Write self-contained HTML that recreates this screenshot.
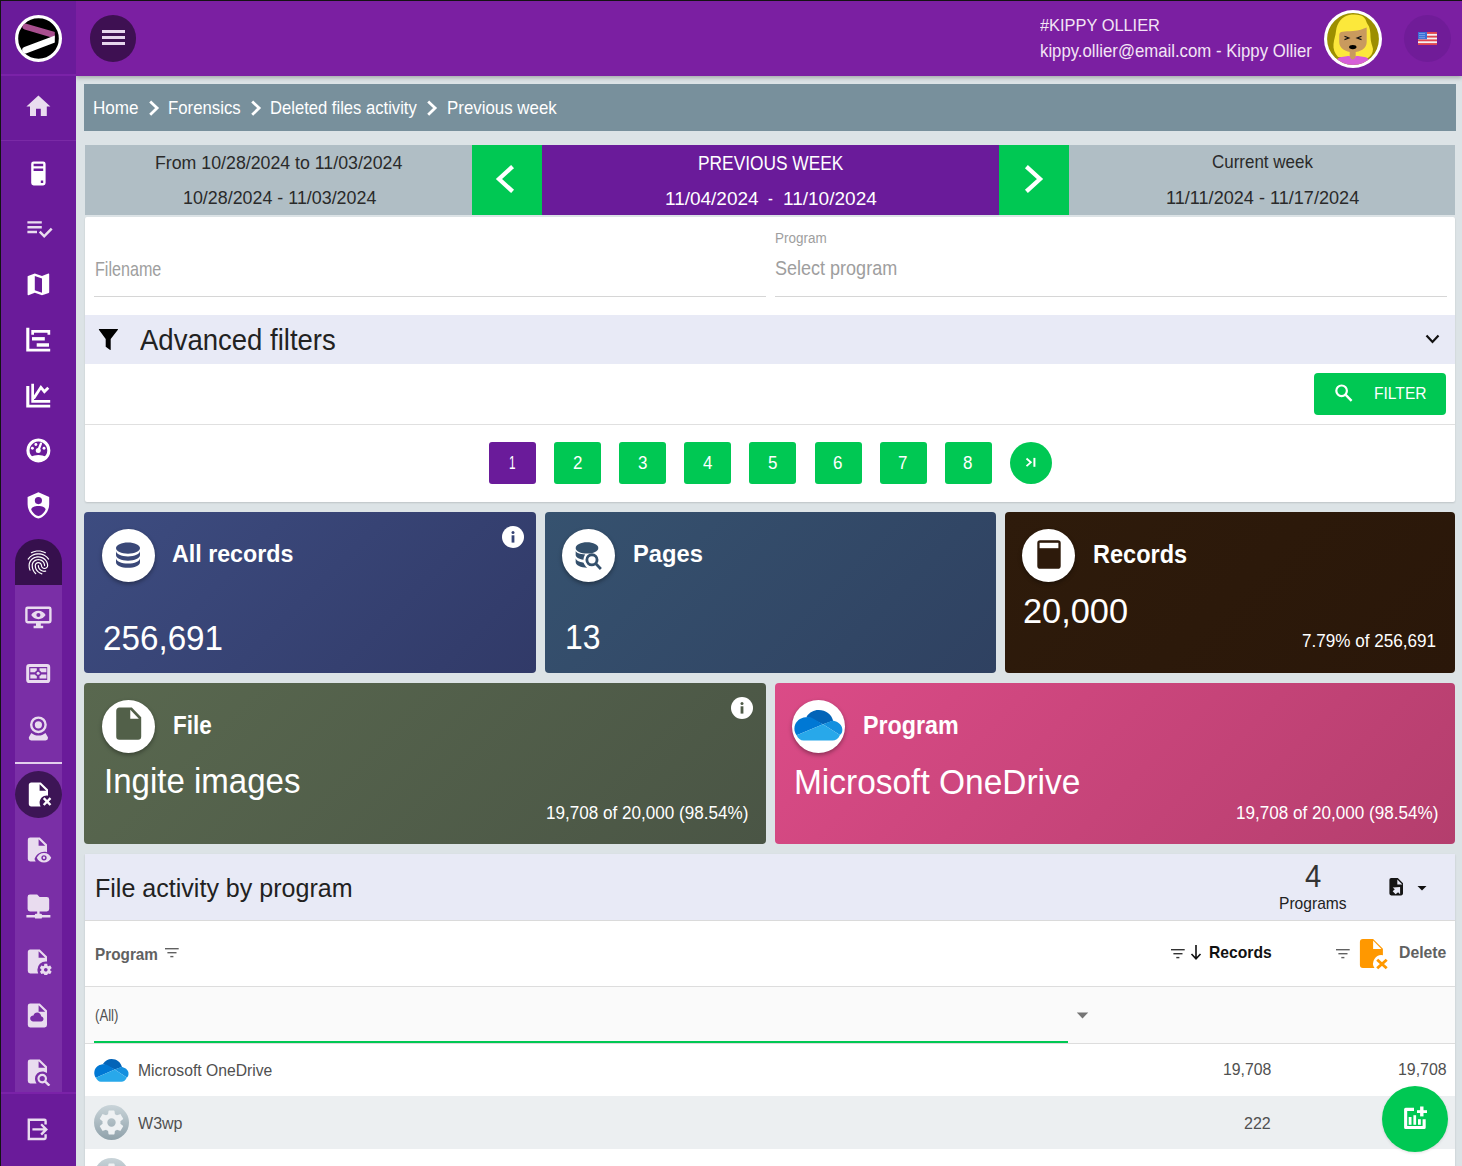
<!DOCTYPE html>
<html><head><meta charset="utf-8"><style>
html,body{margin:0;padding:0;}
body{width:1462px;height:1166px;overflow:hidden;position:relative;background:#dce3e6;font-family:"Liberation Sans",sans-serif;}
.b{position:absolute;}
.t{position:absolute;white-space:nowrap;}
</style></head><body>
<div class="b" style="left:0px;top:0px;width:1462px;height:1px;background:#141414;"></div>
<div class="b" style="left:0px;top:0px;width:1px;height:1166px;background:#141414;"></div>
<div class="b" style="left:76px;top:1px;width:1386px;height:75px;background:#7b1fa2;box-shadow:0 2px 4px rgba(0,0,0,0.25);z-index:2;"></div>
<div class="b" style="left:1px;top:1px;width:75px;height:1165px;background:#6a1b9a;z-index:3;"></div>
<div class="b" style="left:1px;top:74px;width:75px;height:2px;background:#7a22a8;z-index:3;"></div>
<div class="b" style="left:1px;top:140px;width:75px;height:1px;background:#7a2aa6;z-index:3;"></div>
<div class="t" style="left:1040.00px;top:17.02px;font-size:17.10px;line-height:17.10px;color:#f3e5f5;transform-origin:0 0;transform:scaleX(0.9586);z-index:4;">#KIPPY OLLIER</div>
<div class="t" style="left:1040.00px;top:42.61px;font-size:17.83px;line-height:17.83px;color:#f3e5f5;transform-origin:0 0;transform:scaleX(0.9397);z-index:4;">kippy.ollier@email.com - Kippy Ollier</div>
<div class="b" style="left:84px;top:84px;width:1372px;height:47px;background:#78909c;"></div>
<div class="t" style="left:93.30px;top:97.71px;font-size:19.13px;line-height:19.13px;color:#ffffff;transform-origin:0 0;transform:scaleX(0.8947);">Home</div>
<div class="t" style="left:168.00px;top:97.71px;font-size:19.13px;line-height:19.13px;color:#ffffff;transform-origin:0 0;transform:scaleX(0.8777);">Forensics</div>
<div class="t" style="left:270.00px;top:97.71px;font-size:19.13px;line-height:19.13px;color:#ffffff;transform-origin:0 0;transform:scaleX(0.8692);">Deleted files activity</div>
<div class="t" style="left:446.70px;top:97.71px;font-size:19.13px;line-height:19.13px;color:#ffffff;transform-origin:0 0;transform:scaleX(0.8833);">Previous week</div>
<div class="b" style="left:85px;top:145px;width:387px;height:70px;background:#b0bec5;"></div>
<div class="b" style="left:472px;top:145px;width:70px;height:70px;background:#00c853;"></div>
<div class="b" style="left:542px;top:145px;width:457px;height:70px;background:#6a1b9a;"></div>
<div class="b" style="left:999px;top:145px;width:70px;height:70px;background:#00c853;"></div>
<div class="b" style="left:1069px;top:145px;width:386px;height:70px;background:#b0bec5;"></div>
<div class="t" style="left:155.00px;top:154.06px;font-size:18.12px;line-height:18.12px;color:#2a2a2a;transform-origin:0 0;transform:scaleX(0.9800);">From 10/28/2024 to 11/03/2024</div>
<div class="t" style="left:182.60px;top:188.84px;font-size:18.26px;line-height:18.26px;color:#2a2a2a;transform-origin:0 0;transform:scaleX(0.9788);">10/28/2024 - 11/03/2024</div>
<div class="t" style="left:698.00px;top:154.14px;font-size:19.57px;line-height:19.57px;color:#ffffff;transform-origin:0 0;transform:scaleX(0.8858);">PREVIOUS WEEK</div>
<div class="t" style="left:664.80px;top:191.29px;font-size:17.97px;line-height:17.97px;color:#ffffff;transform-origin:0 0;transform:scaleX(1.0565);">11/04/2024</div>
<div class="t" style="left:768.00px;top:191.29px;font-size:17.97px;line-height:17.97px;color:#ffffff;transform-origin:0 0;transform:scaleX(0.8094);">-</div>
<div class="t" style="left:782.70px;top:191.29px;font-size:17.97px;line-height:17.97px;color:#ffffff;transform-origin:0 0;transform:scaleX(1.0599);">11/10/2024</div>
<div class="t" style="left:1211.70px;top:154.21px;font-size:17.83px;line-height:17.83px;color:#2a2a2a;transform-origin:0 0;transform:scaleX(0.9516);">Current week</div>
<div class="t" style="left:1165.70px;top:188.86px;font-size:18.12px;line-height:18.12px;color:#2a2a2a;transform-origin:0 0;transform:scaleX(0.9995);">11/11/2024 - 11/17/2024</div>
<div class="b" style="left:85px;top:217px;width:1370px;height:285px;background:#ffffff;box-shadow:0 1px 2px rgba(0,0,0,0.14);border-radius:2px;"></div>
<div class="t" style="left:94.50px;top:260.46px;font-size:19.42px;line-height:19.42px;color:#9e9e9e;transform-origin:0 0;transform:scaleX(0.8306);">Filename</div>
<div class="b" style="left:94px;top:296px;width:672px;height:1px;background:#d6d6d6;"></div>
<div class="t" style="left:775.40px;top:230.73px;font-size:14.49px;line-height:14.49px;color:#9e9e9e;transform-origin:0 0;transform:scaleX(0.9296);">Program</div>
<div class="t" style="left:775.40px;top:259.02px;font-size:19.71px;line-height:19.71px;color:#9e9e9e;transform-origin:0 0;transform:scaleX(0.9152);">Select program</div>
<div class="b" style="left:775px;top:296px;width:672px;height:1px;background:#d6d6d6;"></div>
<div class="b" style="left:85px;top:315px;width:1370px;height:49px;background:#e8eaf6;"></div>
<div class="t" style="left:140.30px;top:325.25px;font-size:29.71px;line-height:29.71px;color:#222222;transform-origin:0 0;transform:scaleX(0.9264);">Advanced filters</div>
<div class="b" style="left:1314px;top:373px;width:132px;height:42px;background:#00c853;border-radius:4px;"></div>
<div class="t" style="left:1374.40px;top:386.25px;font-size:16.96px;line-height:16.96px;color:#ffffff;transform-origin:0 0;transform:scaleX(0.9205);">FILTER</div>
<div class="b" style="left:85px;top:424px;width:1370px;height:1px;background:#e0e0e0;"></div>
<div class="b" style="left:489.0px;top:442px;width:47px;height:42px;background:#6a1b9a;border-radius:3px;"></div>
<div class="t" style="left:508.70px;top:454.76px;font-size:17.54px;line-height:17.54px;color:#ffffff;transform-origin:0 0;transform:scaleX(0.6721);">1</div>
<div class="b" style="left:554.1px;top:442px;width:47px;height:42px;background:#00c853;border-radius:3px;"></div>
<div class="t" style="left:572.85px;top:454.76px;font-size:17.54px;line-height:17.54px;color:#ffffff;transform-origin:0 0;transform:scaleX(0.9674);">2</div>
<div class="b" style="left:619.2px;top:442px;width:47px;height:42px;background:#00c853;border-radius:3px;"></div>
<div class="t" style="left:637.95px;top:454.76px;font-size:17.54px;line-height:17.54px;color:#ffffff;transform-origin:0 0;transform:scaleX(0.9674);">3</div>
<div class="b" style="left:684.3px;top:442px;width:47px;height:42px;background:#00c853;border-radius:3px;"></div>
<div class="t" style="left:703.05px;top:454.76px;font-size:17.54px;line-height:17.54px;color:#ffffff;transform-origin:0 0;transform:scaleX(0.9674);">4</div>
<div class="b" style="left:749.4px;top:442px;width:47px;height:42px;background:#00c853;border-radius:3px;"></div>
<div class="t" style="left:768.15px;top:454.76px;font-size:17.54px;line-height:17.54px;color:#ffffff;transform-origin:0 0;transform:scaleX(0.9674);">5</div>
<div class="b" style="left:814.5px;top:442px;width:47px;height:42px;background:#00c853;border-radius:3px;"></div>
<div class="t" style="left:833.25px;top:454.76px;font-size:17.54px;line-height:17.54px;color:#ffffff;transform-origin:0 0;transform:scaleX(0.9674);">6</div>
<div class="b" style="left:879.5999999999999px;top:442px;width:47px;height:42px;background:#00c853;border-radius:3px;"></div>
<div class="t" style="left:898.35px;top:454.76px;font-size:17.54px;line-height:17.54px;color:#ffffff;transform-origin:0 0;transform:scaleX(0.9674);">7</div>
<div class="b" style="left:944.6999999999999px;top:442px;width:47px;height:42px;background:#00c853;border-radius:3px;"></div>
<div class="t" style="left:963.45px;top:454.76px;font-size:17.54px;line-height:17.54px;color:#ffffff;transform-origin:0 0;transform:scaleX(0.9674);">8</div>
<div class="b" style="left:1010px;top:442px;width:42px;height:42px;background:#00c853;border-radius:50%;"></div>
<div class="b" style="left:84px;top:512px;width:452px;height:161px;background:linear-gradient(135deg,#3d4c80,#313a68);border-radius:4px;"></div>
<div class="b" style="left:545px;top:512px;width:451px;height:161px;background:linear-gradient(135deg,#36526f,#2f4161);border-radius:4px;"></div>
<div class="b" style="left:1005px;top:512px;width:450px;height:161px;background:linear-gradient(135deg,#2e1b0b,#2a1709);border-radius:4px;"></div>
<div class="b" style="left:84px;top:683px;width:682px;height:161px;background:linear-gradient(135deg,#59684f,#4a5545);border-radius:4px;"></div>
<div class="b" style="left:775px;top:683px;width:680px;height:161px;background:linear-gradient(135deg,#db4b87,#b43e6d);border-radius:4px;"></div>
<div class="b" style="left:101.5px;top:528.9px;width:53px;height:53px;background:#ffffff;border-radius:50%;box-shadow:0 2px 4px rgba(0,0,0,0.35);"></div>
<div class="b" style="left:561.9px;top:528.9px;width:53px;height:53px;background:#ffffff;border-radius:50%;box-shadow:0 2px 4px rgba(0,0,0,0.35);"></div>
<div class="b" style="left:1022.0px;top:528.9px;width:53px;height:53px;background:#ffffff;border-radius:50%;box-shadow:0 2px 4px rgba(0,0,0,0.35);"></div>
<div class="b" style="left:101.5px;top:700.0px;width:53px;height:53px;background:#ffffff;border-radius:50%;box-shadow:0 2px 4px rgba(0,0,0,0.35);"></div>
<div class="b" style="left:792.0px;top:700.0px;width:53px;height:53px;background:#ffffff;border-radius:50%;box-shadow:0 2px 4px rgba(0,0,0,0.35);"></div>
<div class="t" style="left:172.00px;top:542.42px;font-size:24.78px;line-height:24.78px;color:#ffffff;transform-origin:0 0;transform:scaleX(0.9384);font-weight:bold;">All records</div>
<div class="t" style="left:633.00px;top:542.42px;font-size:24.78px;line-height:24.78px;color:#ffffff;transform-origin:0 0;transform:scaleX(0.9575);font-weight:bold;">Pages</div>
<div class="t" style="left:1093.40px;top:542.15px;font-size:25.22px;line-height:25.22px;color:#ffffff;transform-origin:0 0;transform:scaleX(0.9329);font-weight:bold;">Records</div>
<div class="t" style="left:102.60px;top:620.27px;font-size:35.24px;line-height:35.24px;color:#ffffff;transform-origin:0 0;transform:scaleX(0.9424);">256,691</div>
<div class="t" style="left:564.60px;top:620.43px;font-size:34.81px;line-height:34.81px;color:#ffffff;transform-origin:0 0;transform:scaleX(0.9161);">13</div>
<div class="t" style="left:1023.30px;top:592.77px;font-size:35.24px;line-height:35.24px;color:#ffffff;transform-origin:0 0;transform:scaleX(0.9745);">20,000</div>
<div class="t" style="left:1302.20px;top:633.34px;font-size:17.91px;line-height:17.91px;color:#ffffff;transform-origin:0 0;transform:scaleX(0.9551);">7.79% of 256,691</div>
<div class="t" style="left:173.20px;top:713.05px;font-size:25.22px;line-height:25.22px;color:#ffffff;transform-origin:0 0;transform:scaleX(0.8899);font-weight:bold;">File</div>
<div class="t" style="left:863.40px;top:713.05px;font-size:25.22px;line-height:25.22px;color:#ffffff;transform-origin:0 0;transform:scaleX(0.9224);font-weight:bold;">Program</div>
<div class="t" style="left:104.00px;top:763.80px;font-size:34.49px;line-height:34.49px;color:#ffffff;transform-origin:0 0;transform:scaleX(0.9575);">Ingite images</div>
<div class="t" style="left:793.60px;top:763.89px;font-size:35.22px;line-height:35.22px;color:#ffffff;transform-origin:0 0;transform:scaleX(0.9500);">Microsoft OneDrive</div>
<div class="t" style="left:546.00px;top:804.70px;font-size:17.48px;line-height:17.48px;color:#ffffff;transform-origin:0 0;transform:scaleX(0.9780);">19,708 of 20,000 (98.54%)</div>
<div class="t" style="left:1236.00px;top:804.70px;font-size:17.48px;line-height:17.48px;color:#ffffff;transform-origin:0 0;transform:scaleX(0.9780);">19,708 of 20,000 (98.54%)</div>
<div class="b" style="left:85px;top:854px;width:1370px;height:320px;background:#ffffff;box-shadow:0 1px 2px rgba(0,0,0,0.14);"></div>
<div class="b" style="left:85px;top:854px;width:1370px;height:66px;background:#e8eaf6;"></div>
<div class="b" style="left:85px;top:920px;width:1370px;height:1px;background:#dadada;"></div>
<div class="t" style="left:95.00px;top:874.57px;font-size:26.38px;line-height:26.38px;color:#222222;transform-origin:0 0;transform:scaleX(0.9500);">File activity by program</div>
<div class="t" style="left:1304.60px;top:861.46px;font-size:31.95px;line-height:31.95px;color:#333333;transform-origin:0 0;transform:scaleX(0.9167);">4</div>
<div class="t" style="left:1279.40px;top:894.64px;font-size:16.38px;line-height:16.38px;color:#222222;transform-origin:0 0;transform:scaleX(0.9533);">Programs</div>
<div class="t" style="left:95.00px;top:945.84px;font-size:16.38px;line-height:16.38px;color:#616161;transform-origin:0 0;transform:scaleX(0.9360);font-weight:bold;">Program</div>
<div class="t" style="left:1208.50px;top:945.09px;font-size:16.67px;line-height:16.67px;color:#111111;transform-origin:0 0;transform:scaleX(0.9405);font-weight:bold;">Records</div>
<div class="t" style="left:1398.60px;top:945.09px;font-size:16.67px;line-height:16.67px;color:#616161;transform-origin:0 0;transform:scaleX(0.9480);font-weight:bold;">Delete</div>
<div class="b" style="left:85px;top:986px;width:1370px;height:1px;background:#dddddd;"></div>
<div class="b" style="left:85px;top:987px;width:1370px;height:56px;background:#fafafa;"></div>
<div class="t" style="left:94.50px;top:1007.16px;font-size:16.23px;line-height:16.23px;color:#505050;transform-origin:0 0;transform:scaleX(0.8134);">(All)</div>
<div class="b" style="left:94px;top:1041px;width:974px;height:2px;background:#00c853;"></div>
<div class="b" style="left:85px;top:1043px;width:1370px;height:1px;background:#dddddd;"></div>
<div class="t" style="left:138.00px;top:1061.56px;font-size:16.23px;line-height:16.23px;color:#505050;transform-origin:0 0;transform:scaleX(0.9673);">Microsoft OneDrive</div>
<div class="t" style="left:1222.80px;top:1062.06px;font-size:15.76px;line-height:15.76px;color:#505050;transform-origin:0 0;transform:scaleX(1.0037);">19,708</div>
<div class="t" style="left:1397.60px;top:1062.06px;font-size:15.76px;line-height:15.76px;color:#505050;transform-origin:0 0;transform:scaleX(1.0099);">19,708</div>
<div class="b" style="left:85px;top:1096px;width:1370px;height:53px;background:#eceff1;"></div>
<div class="t" style="left:138.00px;top:1114.96px;font-size:16.23px;line-height:16.23px;color:#505050;transform-origin:0 0;transform:scaleX(0.9884);">W3wp</div>
<div class="t" style="left:1244.20px;top:1115.56px;font-size:15.76px;line-height:15.76px;color:#505050;transform-origin:0 0;transform:scaleX(1.0183);">222</div>
<div class="b" style="left:1382px;top:1086px;width:66px;height:66px;background:#00c853;border-radius:50%;box-shadow:0 1px 3px rgba(0,0,0,0.12);"></div>
<div class="b" style="left:15px;top:539px;width:47px;height:46px;background:#36104d;border-radius:23.5px 23.5px 0 0;z-index:4;"></div>
<div class="b" style="left:15px;top:585px;width:47px;height:507px;background:#7a2fa6;z-index:4;"></div>
<div class="b" style="left:15px;top:762px;width:47px;height:1.5px;background:#e3cfee;z-index:5;"></div>
<div class="b" style="left:15px;top:771px;width:47px;height:47px;background:#3d1556;border-radius:50%;z-index:5;"></div>
<div class="b" style="left:1px;top:1092px;width:75px;height:2px;background:#7a22a8;z-index:4;"></div>
<svg class="b" style="left:23.6px;top:92.4px;z-index:5;" width="28.8" height="28.8" viewBox="0 0 24 24" preserveAspectRatio="none"><path fill="#e9dcef" d="M10,20V14H14V20H19V12H22L12,3L2,12H5V20H10Z"/></svg>
<svg class="b" style="left:24.1px;top:159.3px;z-index:5;" width="28.8" height="28.8" viewBox="0 0 24 24" preserveAspectRatio="none"><path fill="#ffffff" d="M8,2H16A2,2 0 0,1 18,4V20A2,2 0 0,1 16,22H8A2,2 0 0,1 6,20V4A2,2 0 0,1 8,2M8,4V6H16V4H8M16,8H8V10H16V8M16,18H14V20H16V18Z"/></svg>
<svg class="b" style="left:25.2px;top:214.0px;z-index:5;" width="28.8" height="28.8" viewBox="0 0 24 24" preserveAspectRatio="none"><path fill="#e9dcef" d="M14,10H2V12H14V10M14,6H2V8H14V6M2,16H10V14H2V16M21.5,11.5L23,13L16,20L11.5,15.5L13,14L16,17L21.5,11.5Z"/></svg>
<svg class="b" style="left:24.1px;top:270.3px;z-index:5;" width="28.8" height="28.8" viewBox="0 0 24 24" preserveAspectRatio="none"><path fill="#ffffff" d="M15,19L9,16.89V5L15,7.11M20.5,3C20.44,3 20.39,3 20.34,3L15,5.1L9,3L3.36,4.9C3.15,4.97 3,5.15 3,5.38V20.5A0.5,0.5 0 0,0 3.5,21C3.55,21 3.61,21 3.66,20.97L9,18.9L15,21L20.64,19.1C20.85,19 21,18.85 21,18.62V3.5A0.5,0.5 0 0,0 20.5,3Z"/></svg>
<svg class="b" style="left:22px;top:322px;z-index:5;" width="34" height="90" viewBox="0 0 34 90" preserveAspectRatio="none"><g fill="#fff"><path d="M4.25,5.8H7.35V26.7H28.2V29.4H4.25Z"/><path d="M9.3,8.1H28.2V12.75H25.5V10.8H12V12.75H9.3Z"/><rect x="10" y="15.1" width="12.8" height="3.4"/><rect x="14.7" y="21.25" width="12.3" height="3.45"/><path d="M4.25,64.1H7.35V82.7H28.2V85.4H4.25Z"/><path d="M9.3,61.8H12V78H28.2V80.8H9.3Z"/></g><path d="M11.6,76.5L18.9,65.3L22.4,69.6L26.3,65.7" stroke="#fff" stroke-width="2.8" fill="none"/></svg>
<svg class="b" style="left:24.0px;top:435.9px;z-index:5;" width="28.8" height="28.8" viewBox="0 0 24 24" preserveAspectRatio="none"><path fill="#fff" fill-rule="evenodd" d="M12,2A10,10 0 1,1 11.99,2ZM12,4.6A7.4,7.4 0 1,0 12.01,4.6Z"/><path fill="#fff" d="M5.3,17.2Q12,14.3 18.7,17.2A7.5,7.5 0 0,1 5.3,17.2Z"/><circle cx="11.9" cy="12.1" r="2.1" fill="#fff"/><path d="M11.9,12.1L14.1,6.3" stroke="#fff" stroke-width="1.9" stroke-linecap="round"/><circle cx="7" cy="10.2" r="1.2" fill="#fff"/><circle cx="9.9" cy="7.1" r="1.2" fill="#fff"/><circle cx="16.7" cy="10.2" r="1.2" fill="#fff"/></svg>
<svg class="b" style="left:24.0px;top:491.1px;z-index:5;" width="28.8" height="28.8" viewBox="0 0 24 24" preserveAspectRatio="none"><path fill="#ffffff" d="M12,1L3,5V11C3,16.55 6.84,21.74 12,23C17.16,21.74 21,16.55 21,11V5L12,1M12,5A3,3 0 0,1 15,8A3,3 0 0,1 12,11A3,3 0 0,1 9,8A3,3 0 0,1 12,5M17.13,17C15.92,18.85 14.11,20.24 12,20.92C9.89,20.24 8.08,18.85 6.87,17C6.53,16.5 6.24,16 6,15.47C6,13.82 8.71,12.47 12,12.47C15.29,12.47 18,13.79 18,15.47C17.76,16 17.47,16.5 17.13,17Z"/></svg>
<svg class="b" style="left:24.1px;top:547.6px;z-index:5;" width="28.8" height="28.8" viewBox="0 0 24 24" preserveAspectRatio="none"><path fill="#ffffff" d="M17.81,4.47C17.73,4.47 17.65,4.45 17.58,4.41C15.66,3.42 14,3 12,3C10.03,3 8.15,3.47 6.44,4.41C6.2,4.54 5.9,4.45 5.76,4.21C5.63,3.97 5.72,3.66 5.96,3.53C7.82,2.5 9.86,2 12,2C14.14,2 16,2.47 18.04,3.5C18.29,3.65 18.38,3.95 18.25,4.19C18.16,4.37 18,4.47 17.81,4.47M3.5,9.72C3.4,9.72 3.3,9.69 3.21,9.63C3,9.47 2.93,9.16 3.09,8.93C4.08,7.53 5.34,6.43 6.84,5.66C10,4.04 14,4.03 17.15,5.65C18.65,6.42 19.91,7.5 20.9,8.9C21.06,9.12 21,9.44 20.78,9.6C20.55,9.76 20.24,9.71 20.08,9.5C19.18,8.22 18.04,7.23 16.69,6.54C13.82,5.07 10.15,5.07 7.29,6.55C5.93,7.25 4.79,8.25 3.89,9.5C3.81,9.65 3.66,9.72 3.5,9.72M9.75,21.79C9.62,21.79 9.5,21.74 9.4,21.64C8.53,20.77 8.06,20.21 7.39,19C6.7,17.77 6.34,16.27 6.34,14.66C6.34,11.69 8.88,9.27 12,9.27C15.12,9.27 17.66,11.69 17.66,14.66A0.5,0.5 0 0,1 17.16,15.16A0.5,0.5 0 0,1 16.66,14.66C16.66,12.24 14.57,10.27 12,10.27C9.43,10.27 7.34,12.24 7.34,14.66C7.34,16.1 7.66,17.43 8.27,18.5C8.91,19.66 9.35,20.15 10.12,20.93C10.31,21.13 10.31,21.44 10.12,21.64C10,21.74 9.88,21.79 9.75,21.79M16.92,19.94C15.73,19.94 14.68,19.64 13.82,19.05C12.33,18.04 11.44,16.4 11.44,14.66A0.5,0.5 0 0,1 11.94,14.16A0.5,0.5 0 0,1 12.44,14.66C12.44,16.07 13.16,17.4 14.38,18.22C15.09,18.7 15.92,18.93 16.92,18.93C17.16,18.93 17.56,18.9 17.96,18.83C18.23,18.78 18.5,18.96 18.54,19.24C18.59,19.5 18.41,19.77 18.13,19.82C17.56,19.93 17.06,19.94 16.92,19.94M14.91,22C14.87,22 14.82,22 14.78,22C13.19,21.54 12.15,20.95 11.06,19.88C9.66,18.5 8.89,16.64 8.89,14.66C8.89,13.04 10.27,11.72 11.97,11.72C13.67,11.72 15.05,13.04 15.05,14.66C15.05,15.73 16,16.6 17.13,16.6C18.28,16.6 19.21,15.73 19.21,14.66C19.21,10.89 15.96,7.83 11.96,7.83C9.12,7.83 6.5,9.41 5.35,11.86C4.96,12.67 4.76,13.62 4.76,14.66C4.76,15.44 4.83,16.67 5.43,18.27C5.53,18.53 5.4,18.82 5.14,18.91C4.88,19 4.59,18.87 4.5,18.62C4,17.31 3.77,16 3.77,14.66C3.77,13.46 4,12.37 4.45,11.42C5.78,8.63 8.73,6.82 11.96,6.82C16.5,6.82 20.21,10.33 20.21,14.65C20.21,16.27 18.83,17.59 17.13,17.59C15.43,17.59 14.05,16.27 14.05,14.65C14.05,13.58 13.12,12.71 11.97,12.71C10.83,12.71 9.9,13.58 9.9,14.65C9.9,16.36 10.56,17.96 11.77,19.16C12.72,20.1 13.63,20.62 15.04,21C15.31,21.08 15.46,21.36 15.39,21.62C15.33,21.85 15.12,22 14.91,22Z"/></svg>
<svg class="b" style="left:24.1px;top:603.1px;z-index:5;" width="28.8" height="28.8" viewBox="0 0 24 24" preserveAspectRatio="none"><path fill="#e9dcef" d="M3,3H21A2,2 0 0,1 23,5V15A2,2 0 0,1 21,17H14V19H16V21H8V19H10V17H3A2,2 0 0,1 1,15V5A2,2 0 0,1 3,3M3,5V15H21V5H3M12,6.5C14.7,6.5 16.9,8.1 18,10C16.9,11.9 14.7,13.5 12,13.5C9.3,13.5 7.1,11.9 6,10C7.1,8.1 9.3,6.5 12,6.5M12,8.3A1.7,1.7 0 0,0 10.3,10A1.7,1.7 0 0,0 12,11.7A1.7,1.7 0 0,0 13.7,10A1.7,1.7 0 0,0 12,8.3Z"/></svg>
<svg class="b" style="left:24px;top:660px;z-index:5;" width="30" height="26" viewBox="0 0 30 26" preserveAspectRatio="none"><rect x="3.7" y="5.6" width="21" height="15.9" rx="1.6" stroke="#e9dcef" stroke-width="3" fill="none"/><g fill="#e9dcef"><path d="M6.3,8.2H12.8V10.6A3.2,3.2 0 0,0 11,12.3H6.3Z"/><path d="M22.4,8.2H15.5V10.6A3.2,3.2 0 0,1 17.3,12.3H22.4Z"/><path d="M6.3,18.5H12.8V16.1A3.2,3.2 0 0,1 11,14.4H6.3Z"/><path d="M22.4,18.5H15.5V16.1A3.2,3.2 0 0,0 17.3,14.4H22.4Z"/></g><circle cx="14.15" cy="13.35" r="1.5" fill="#e9dcef"/></svg>
<svg class="b" style="left:24.0px;top:714.1px;z-index:5;" width="28.8" height="28.8" viewBox="0 0 24 24" preserveAspectRatio="none"><path fill="#e9dcef" d="M12,2A7,7 0 0,1 19,9A7,7 0 0,1 12,16A7,7 0 0,1 5,9A7,7 0 0,1 12,2M12,4A5,5 0 0,0 7,9A5,5 0 0,0 12,14A5,5 0 0,0 17,9A5,5 0 0,0 12,4M12,6A3,3 0 0,1 15,9A3,3 0 0,1 12,12A3,3 0 0,1 9,9A3,3 0 0,1 12,6M6,22A2,2 0 0,1 4,20C4,19.62 4.1,19.27 4.29,18.97L6.11,15.81C7.69,17.17 9.75,18 12,18C14.25,18 16.31,17.17 17.89,15.81L19.71,18.97C19.9,19.27 20,19.62 20,20A2,2 0 0,1 18,22H6Z"/></svg>
<svg class="b" style="left:24.1px;top:780.2px;z-index:5;" width="28.8" height="28.8" viewBox="0 0 24 24" preserveAspectRatio="none"><path fill="#ffffff" d="M14,2H6C4.89,2 4,2.89 4,4V20C4,21.11 4.89,22 6,22H13.81C13.28,21.09 13,20.05 13,19C13,15.69 15.69,13 19,13C19.34,13 19.67,13.03 20,13.08V8L14,2M13,9V3.5L18.5,9H13M17.12,14.46L19.24,16.59L21.36,14.46L22.78,15.88L20.66,18L22.78,20.12L21.36,21.54L19.24,19.41L17.12,21.54L15.71,20.12L17.83,18L15.71,15.88L17.12,14.46Z"/></svg>
<svg class="b" style="left:23.4px;top:835.1px;z-index:5;" width="28.8" height="28.8" viewBox="0 0 24 24" preserveAspectRatio="none"><path fill="#e9dcef" d="M14,2H6A2,2 0 0,0 4,4V20A2,2 0 0,0 6,22H10.6C10.2,21.4 9.9,20.7 9.6,20C10.9,16.5 14,14 17.6,14C18.4,14 19.2,14.1 20,14.4V8L14,2M13,9V3.5L18.5,9H13M17.5,15C14.8,15 12.4,16.7 11.5,19C12.4,21.3 14.8,23 17.5,23C20.2,23 22.6,21.3 23.5,19C22.6,16.7 20.2,15 17.5,15M17.5,16.8A2.2,2.2 0 0,1 19.7,19A2.2,2.2 0 0,1 17.5,21.2A2.2,2.2 0 0,1 15.3,19A2.2,2.2 0 0,1 17.5,16.8M17.5,18A1,1 0 0,0 16.5,19A1,1 0 0,0 17.5,20A1,1 0 0,0 18.5,19A1,1 0 0,0 17.5,18Z"/></svg>
<svg class="b" style="left:24.1px;top:890.8px;z-index:5;" width="28.8" height="28.8" viewBox="0 0 24 24" preserveAspectRatio="none"><path fill="#e9dcef" d="M3,15V5A2,2 0 0,1 5,3H11L13,5H19A2,2 0 0,1 21,7V15A2,2 0 0,1 19,17H13V19H14A1,1 0 0,1 15,20H22V22H15A1,1 0 0,1 14,23H10A1,1 0 0,1 9,22H2V20H9A1,1 0 0,1 10,19H11V17H5A2,2 0 0,1 3,15Z"/></svg>
<svg class="b" style="left:23.4px;top:946.6px;z-index:5;" width="28.8" height="28.8" viewBox="0 0 24 24" preserveAspectRatio="none"><path fill="#e9dcef" d="M6,2C4.89,2 4,2.89 4,4V20A2,2 0 0,0 6,22H12.68A7,7 0 0,1 12,19A7,7 0 0,1 19,12A7,7 0 0,1 20,12.08V8L14,2H6M13,3.5L18.5,9H13V3.5M18,14A0.26,0.26 0 0,0 17.75,14.21L17.56,15.53C17.26,15.66 16.97,15.82 16.71,16L15.47,15.5C15.36,15.5 15.23,15.5 15.16,15.63L14.16,17.36C14.1,17.47 14.12,17.6 14.22,17.68L15.28,18.5C15.26,18.67 15.25,18.83 15.25,19C15.25,19.17 15.26,19.33 15.28,19.5L14.22,20.32C14.13,20.4 14.1,20.53 14.16,20.64L15.16,22.37C15.22,22.5 15.35,22.5 15.47,22.5L16.71,22C16.97,22.18 17.25,22.35 17.56,22.47L17.75,23.79C17.77,23.91 17.87,24 18,24H20C20.11,24 20.22,23.91 20.24,23.79L20.43,22.47C20.73,22.34 21,22.18 21.27,22L22.5,22.5C22.63,22.5 22.76,22.5 22.83,22.37L23.83,20.64C23.89,20.53 23.86,20.4 23.77,20.32L22.7,19.5C22.72,19.33 22.74,19.17 22.74,19C22.74,18.83 22.73,18.67 22.7,18.5L23.76,17.68C23.85,17.6 23.88,17.47 23.82,17.36L22.82,15.63C22.76,15.5 22.63,15.5 22.5,15.5L21.27,16C21,15.82 20.73,15.65 20.42,15.53L20.23,14.21C20.22,14.09 20.11,14 20,14H18M19,17.5C19.83,17.5 20.5,18.17 20.5,19C20.5,19.83 19.83,20.5 19,20.5C18.16,20.5 17.5,19.83 17.5,19C17.5,18.17 18.17,17.5 19,17.5Z"/></svg>
<svg class="b" style="left:23.4px;top:1001.3px;z-index:5;" width="28.8" height="28.8" viewBox="0 0 24 24" preserveAspectRatio="none"><path fill="#e9dcef" d="M14,2H6A2,2 0 0,0 4,4V20A2,2 0 0,0 6,22H18A2,2 0 0,0 20,20V8L14,2M15.16,17H8.5C7.12,17 6,15.88 6,14.5C6,13.12 7.12,12 8.5,12H8.75C9.08,10.57 10.36,9.5 11.88,9.5C13.69,9.5 15.14,10.95 15.14,12.75V13H15.16C16.22,13 17.08,13.86 17.08,14.91C17.08,16 16.22,17 15.16,17M13,9V3.5L18.5,9H13Z"/></svg>
<svg class="b" style="left:23.4px;top:1057.1px;z-index:5;" width="28.8" height="28.8" viewBox="0 0 24 24" preserveAspectRatio="none"><path fill="#e9dcef" d="M14,2H6A2,2 0 0,0 4,4V20A2,2 0 0,0 6,22H11.3C10.5,20.9 10,19.5 10,18A6,6 0 0,1 16,12C17.5,12 18.9,12.5 20,13.3V8L14,2M13,9V3.5L18.5,9H13M16,14A4,4 0 0,0 12,18A4,4 0 0,0 16,22C16.8,22 17.5,21.8 18.1,21.4L21.3,24.6L22.7,23.2L19.5,20C19.8,19.4 20,18.7 20,18A4,4 0 0,0 16,14M16,15.8A2.2,2.2 0 0,1 18.2,18A2.2,2.2 0 0,1 16,20.2A2.2,2.2 0 0,1 13.8,18A2.2,2.2 0 0,1 16,15.8Z"/></svg>
<svg class="b" style="left:24.1px;top:1115.3px;z-index:5;" width="28.8" height="28.8" viewBox="0 0 24 24" preserveAspectRatio="none"><path fill="#e9dcef" d="M3,3H17A2,2 0 0,1 19,5V8H17V5H5V19H17V16H19V19A2,2 0 0,1 17,21H3Z M3,3H5V21H3Z M7,11H16.2L13.6,8.4L15,7L20,12L15,17L13.6,15.6L16.2,13H7Z"/></svg>
<svg class="b" style="left:15px;top:15px;z-index:5;" width="47" height="47" viewBox="0 0 47 47" preserveAspectRatio="none"><defs><clipPath id="lc"><circle cx="23.5" cy="23.5" r="20.6"/></clipPath><clipPath id="lr"><rect x="0" y="0" width="39.8" height="47"/></clipPath></defs>
<circle cx="23.5" cy="23.5" r="21.9" fill="#000" stroke="#fff" stroke-width="3.2"/>
<g clip-path="url(#lc)"><g clip-path="url(#lr)"><path d="M10.5,11.6L42,20.9" stroke="#a94f8f" stroke-width="6.2" stroke-linecap="round"/>
<path d="M42,23.3L10.5,35.2" stroke="#fff" stroke-width="6.6" stroke-linecap="round"/></g></g></svg>
<div class="b" style="left:89.6px;top:15px;width:46.8px;height:46.8px;background:#3e1052;border-radius:50%;z-index:4;"></div>
<div class="b" style="left:102.4px;top:30.4px;width:22.2px;height:2.9px;background:#e6d6ec;z-index:5;"></div>
<div class="b" style="left:102.4px;top:36.4px;width:22.2px;height:2.9px;background:#e6d6ec;z-index:5;"></div>
<div class="b" style="left:102.4px;top:42.3px;width:22.2px;height:2.9px;background:#e6d6ec;z-index:5;"></div>
<svg class="b" style="left:1323px;top:8.5px;z-index:5;" width="60" height="60" viewBox="0 0 60 60" preserveAspectRatio="none"><defs><clipPath id="ac"><circle cx="30" cy="30" r="25.9"/></clipPath></defs>
<circle cx="30" cy="30" r="29" fill="#fff"/>
<g clip-path="url(#ac)"><rect width="60" height="60" fill="#9c8f00"/>
<path d="M15,48C11.5,44 10,40 10.5,35C11,30 12.5,27 13,22C14,14 19,7.5 26,6C32,5 38,5.5 41,8.5C43.5,11 43,13 44.5,15C47,18 47.5,23 47.5,28C47.5,33 49.5,37 50,40C50,44 48,47 45,49Z" fill="#fce83b"/>
<path d="M16.2,27C16.2,21 21,23 30,22C36,21.5 40,20 43.7,18.5C43.7,25 43.7,30 43.7,33C43.7,39 37.5,43.3 30,43.3C22.5,43.3 16.2,39 16.2,33Z" fill="#c99a5e"/>
<rect x="26.7" y="40" width="6" height="11" fill="#c99a5e"/>
<path d="M13.5,60V52C13.5,49 17,48 22,47.5C25,47.2 26.5,47 26.7,47.2C27.5,49.5 28.5,50.5 29.7,50.5C31,50.5 32,49.5 32.7,47.2C33,47 35,47.2 38,47.5C43,48 46,49 46,52V60Z" fill="#d65ed8"/>
<path d="M21.5,27.3L25.8,29L21.5,30.6M38.5,27.3L34.2,29L38.5,30.6" stroke="#111" stroke-width="1.2" fill="none"/>
<ellipse cx="29.8" cy="38.1" rx="3.7" ry="2.1" fill="#000"/></g></svg>
<div class="b" style="left:1404px;top:14.6px;width:47px;height:47px;background:#701c98;border-radius:50%;z-index:4;"></div>
<svg class="b" style="left:1418px;top:32px;z-index:5;" width="19" height="13" viewBox="0 0 19 13" preserveAspectRatio="none"><rect width="19" height="13" fill="#f4f4f4"/>
<rect y="0" width="19" height="1.9" fill="#e0454f"/><rect y="3.7" width="19" height="1.9" fill="#e0454f"/>
<rect y="7.4" width="19" height="1.9" fill="#e0454f"/><rect y="11.1" width="19" height="1.9" fill="#e0454f"/>
<rect width="9" height="7.2" fill="#3b6fd6"/>
<path d="M1.5,1.5h6M1.5,3.6h6M1.5,5.7h6" stroke="#cfe0ff" stroke-width="0.8" stroke-dasharray="1 1"/></svg>
<svg class="b" style="left:147.6px;top:100px;" width="12" height="16" viewBox="0 0 12 16" preserveAspectRatio="none"><path d="M3.2,2.4L9.1,8.1L3.2,13.8" stroke="#fff" stroke-width="2.8" fill="none" stroke-linecap="square"/></svg>
<svg class="b" style="left:249.7px;top:100px;" width="12" height="16" viewBox="0 0 12 16" preserveAspectRatio="none"><path d="M3.2,2.4L9.1,8.1L3.2,13.8" stroke="#fff" stroke-width="2.8" fill="none" stroke-linecap="square"/></svg>
<svg class="b" style="left:426px;top:100px;" width="12" height="16" viewBox="0 0 12 16" preserveAspectRatio="none"><path d="M3.2,2.4L9.1,8.1L3.2,13.8" stroke="#fff" stroke-width="2.8" fill="none" stroke-linecap="square"/></svg>
<svg class="b" style="left:492px;top:162px;" width="26" height="34" viewBox="0 0 26 34" preserveAspectRatio="none"><path d="M19,6L7,17L19,28" stroke="#fff" stroke-width="4.3" fill="none" stroke-linecap="square"/></svg>
<svg class="b" style="left:1021px;top:162px;" width="26" height="34" viewBox="0 0 26 34" preserveAspectRatio="none"><path d="M7,6L19,17L7,28" stroke="#fff" stroke-width="4.3" fill="none" stroke-linecap="square"/></svg>
<svg class="b" style="left:97px;top:327px;" width="23" height="25" viewBox="0 0 23 25" preserveAspectRatio="none"><path d="M2.2,2H20.7Q21.2,2.3 20.9,2.8L13.7,11.9V22.4Q13.6,23.3 12.8,22.8L8.7,19.8V11.9L1.9,2.8Q1.7,2.2 2.2,2Z" fill="#000"/></svg>
<svg class="b" style="left:1423px;top:331px;" width="19" height="16" viewBox="0 0 19 16" preserveAspectRatio="none"><path d="M3.5,4.5L9.5,11L15.5,4.5" stroke="#111" stroke-width="2.2" fill="none"/></svg>
<svg class="b" style="left:1332px;top:380px;" width="24" height="24" viewBox="0 0 24 24" preserveAspectRatio="none"><circle cx="9.6" cy="10.8" r="5.3" stroke="#fff" stroke-width="2.2" fill="none"/><path d="M13.5,14.7L19.6,20.8" stroke="#fff" stroke-width="2.4"/></svg>
<svg class="b" style="left:1022px;top:453px;" width="18" height="18" viewBox="0 0 18 18" preserveAspectRatio="none"><path d="M4.5,5.5L8.8,9.3L4.5,13.1" stroke="#fff" stroke-width="1.8" fill="none"/><rect x="11.4" y="4.9" width="2" height="8.9" fill="#fff"/></svg>
<svg class="b" style="left:104px;top:527.6px;z-index:6;" width="48" height="48" viewBox="0 0 24 24" preserveAspectRatio="none"><path fill="#3a4878" d="M12,3C7.58,3 4,4.79 4,7C4,9.21 7.58,11 12,11C16.42,11 20,9.21 20,7C20,4.79 16.42,3 12,3M4,9V12C4,14.21 7.58,16 12,16C16.42,16 20,14.21 20,12V9C20,11.21 16.42,13 12,13C7.58,13 4,11.21 4,9M4,14V17C4,19.21 7.58,21 12,21C16.42,21 20,19.21 20,17V14C20,16.21 16.42,18 12,18C7.58,18 4,16.21 4,14Z" transform="translate(3,5.08) scale(0.75,0.706)"/></svg>
<svg class="b" style="left:570.3px;top:537.7px;z-index:6;" width="34" height="34" viewBox="0 0 24 24" preserveAspectRatio="none"><g fill="#34506c">
<path d="M12,3C7.6,3 4,4.8 4,7C4,9.2 7.6,11 12,11C16.4,11 20,9.2 20,7C20,4.8 16.4,3 12,3Z"/>
<path d="M4,9V12C4,13.6 6.2,14.9 9.5,15.3C9.6,14 10,12.7 10.7,11.7C7,11.4 4,10.3 4,9Z"/>
<path d="M4,14V17C4,19.2 7.6,21 12,21H12.2C10.9,19.9 10,18.6 9.6,17.4C6.4,17.1 4,15.7 4,14Z"/>
<path d="M15.5,10.8A4.6,4.6 0 0,0 10.9,15.4A4.6,4.6 0 0,0 15.5,20C16.4,20 17.2,19.7 17.9,19.3L21.1,22.5L22.5,21.1L19.3,17.9C19.8,17.2 20.1,16.3 20.1,15.4A4.6,4.6 0 0,0 15.5,10.8M15.5,12.8A2.6,2.6 0 0,1 18.1,15.4A2.6,2.6 0 0,1 15.5,18A2.6,2.6 0 0,1 12.9,15.4A2.6,2.6 0 0,1 15.5,12.8Z"/>
</g></svg>
<svg class="b" style="left:1036.6px;top:540.2px;z-index:6;" width="24" height="29" viewBox="0 0 24 29" preserveAspectRatio="none"><rect x="0.3" y="0.3" width="23.4" height="28.4" rx="2.8" fill="#2d1a0b"/><rect x="2.6" y="2.8" width="18.8" height="5.4" fill="#fff"/></svg>
<svg class="b" style="left:104.8px;top:702.6px;z-index:6;" width="48" height="48" viewBox="0 0 24 24" preserveAspectRatio="none"><path fill="#526049" d="M13,9V3.5L18.5,9M6,2C4.89,2 4,2.89 4,4V20A2,2 0 0,0 6,22H18A2,2 0 0,0 20,20V8L14,2H6Z" transform="translate(2.5,0.6) scale(0.78,0.81)"/></svg>
<svg class="b" style="left:502px;top:526px;z-index:6;" width="22" height="22" viewBox="0 0 22 22" preserveAspectRatio="none"><circle cx="11" cy="11" r="11" fill="#fff"/><rect x="9.6" y="9.3" width="2.8" height="7.3" fill="#364476"/><circle cx="11" cy="6.6" r="1.5" fill="#364476"/></svg>
<svg class="b" style="left:731px;top:697px;z-index:6;" width="22" height="22" viewBox="0 0 22 22" preserveAspectRatio="none"><circle cx="11" cy="11" r="11" fill="#fff"/><rect x="9.6" y="9.3" width="2.8" height="7.3" fill="#4f5b48"/><circle cx="11" cy="6.6" r="1.5" fill="#4f5b48"/></svg>
<svg class="b" style="left:794px;top:710px;z-index:6;" width="48.6" height="30.6" viewBox="85 212 1030 648" preserveAspectRatio="none"><path d="M350,355C420,250 520,210 610,212C760,215 880,300 915,440L700,515Z" fill="#0364b8"/>
<path d="M140,745C90,680 80,600 110,520C150,420 250,360 380,360C420,360 450,370 480,385L700,515Z" fill="#0078d4"/>
<path d="M700,515L880,445C900,440 920,440 940,445C1040,470 1110,540 1110,630C1110,680 1090,720 1060,740Z" fill="#1490df"/>
<path d="M140,745L700,515L1060,740C1030,820 960,860 900,860H290C220,860 170,810 140,745Z" fill="#28a8ea"/></svg>
<svg class="b" style="left:165px;top:947px;" width="14" height="11" viewBox="0 0 14 11" preserveAspectRatio="none"><rect x="0" y="1" width="13.7" height="1.4" fill="#616161"/><rect x="2.4" y="5" width="9.1" height="1.4" fill="#616161"/><rect x="5.3" y="8.9" width="3.1" height="1.4" fill="#616161"/></svg>
<svg class="b" style="left:1171.4px;top:947.8px;" width="14" height="11" viewBox="0 0 14 11" preserveAspectRatio="none"><rect x="0" y="1" width="13.7" height="1.4" fill="#333"/><rect x="2.4" y="5" width="9.1" height="1.4" fill="#333"/><rect x="5.3" y="8.9" width="3.1" height="1.4" fill="#333"/></svg>
<svg class="b" style="left:1335.6px;top:947.8px;" width="14" height="11" viewBox="0 0 14 11" preserveAspectRatio="none"><rect x="0" y="1" width="13.7" height="1.4" fill="#616161"/><rect x="2.4" y="5" width="9.1" height="1.4" fill="#616161"/><rect x="5.3" y="8.9" width="3.1" height="1.4" fill="#616161"/></svg>
<svg class="b" style="left:1190px;top:944px;" width="12" height="17" viewBox="0 0 12 17" preserveAspectRatio="none"><path d="M6,1V14.5M1.5,10L6,14.8L10.5,10" stroke="#111" stroke-width="1.6" fill="none"/></svg>
<svg class="b" style="left:1358px;top:936px;" width="32" height="34" viewBox="0 0 32 34" preserveAspectRatio="none"><path d="M1.9,6A3,3 0 0,1 4.9,3H15.1L24.9,12.8V19.2A8.4,8.4 0 0,0 16.5,32.1H4.9A3,3 0 0,1 1.9,29.1Z" fill="#ff9800"/><path d="M15.1,4.6V12.9H23.4Z" fill="#fff"/><path d="M19.2,23.7L28.7,32.3M28.7,23.7L19.2,32.3" stroke="#ff9800" stroke-width="2.9"/></svg>
<svg class="b" style="left:1387px;top:877px;" width="19" height="20" viewBox="0 0 19 20" preserveAspectRatio="none"><path d="M2.4,2.8A1.8,1.8 0 0,1 4.2,1H10.8L16,6.2V16.6A1.8,1.8 0 0,1 14.2,18.4H4.2A1.8,1.8 0 0,1 2.4,16.6Z" fill="#151515"/><path d="M10.3,2.6V7.6H15.3Z" fill="#e8eaf6"/><path d="M5.7,10.6L13.1,10V17.2L11.1,15.2L8.6,17.2L5.7,14.3L7.8,12.3Z" fill="#e8eaf6"/></svg>
<svg class="b" style="left:1416px;top:884px;" width="12" height="8" viewBox="0 0 12 8" preserveAspectRatio="none"><path d="M1.5,2H10.5L6,6.5Z" fill="#111"/></svg>
<svg class="b" style="left:1075px;top:1010px;" width="15" height="10" viewBox="0 0 15 10" preserveAspectRatio="none"><path d="M1.8,2.5H13.2L7.5,8.5Z" fill="#757575"/></svg>
<svg class="b" style="left:94px;top:1059px;" width="34.7" height="22.7" viewBox="85 212 1030 648" preserveAspectRatio="none"><path d="M350,355C420,250 520,210 610,212C760,215 880,300 915,440L700,515Z" fill="#0364b8"/>
<path d="M140,745C90,680 80,600 110,520C150,420 250,360 380,360C420,360 450,370 480,385L700,515Z" fill="#0078d4"/>
<path d="M700,515L880,445C900,440 920,440 940,445C1040,470 1110,540 1110,630C1110,680 1090,720 1060,740Z" fill="#1490df"/>
<path d="M140,745L700,515L1060,740C1030,820 960,860 900,860H290C220,860 170,810 140,745Z" fill="#28a8ea"/></svg>
<svg class="b" style="left:94px;top:1105px;" width="35" height="35" viewBox="0 0 35 35" preserveAspectRatio="none"><defs><linearGradient id="gg" x1="0" y1="0" x2="0" y2="1"><stop offset="0" stop-color="#c9d4d9"/><stop offset="1" stop-color="#8fa1aa"/></linearGradient></defs>
<circle cx="17.5" cy="17.5" r="17.5" fill="url(#gg)"/><path fill="#eef1f3" d="M12,15.5A3.5,3.5 0 0,1 8.5,12A3.5,3.5 0 0,1 12,8.5A3.5,3.5 0 0,1 15.5,12A3.5,3.5 0 0,1 12,15.5M19.43,12.97C19.47,12.65 19.5,12.33 19.5,12C19.5,11.67 19.47,11.34 19.43,11L21.54,9.37C21.73,9.22 21.78,8.95 21.66,8.73L19.66,5.27C19.54,5.05 19.27,4.96 19.05,5.05L16.56,6.05C16.04,5.66 15.5,5.32 14.87,5.07L14.5,2.42C14.46,2.18 14.25,2 14,2H10C9.75,2 9.54,2.18 9.5,2.42L9.13,5.07C8.5,5.32 7.96,5.66 7.44,6.05L4.95,5.05C4.73,4.96 4.46,5.05 4.34,5.27L2.34,8.73C2.21,8.95 2.27,9.22 2.46,9.37L4.57,11C4.53,11.34 4.5,11.67 4.5,12C4.5,12.33 4.53,12.65 4.57,12.97L2.46,14.63C2.27,14.78 2.21,15.05 2.34,15.27L4.34,18.73C4.46,18.95 4.73,19.03 4.95,18.95L7.44,17.94C7.96,18.34 8.5,18.68 9.13,18.93L9.5,21.58C9.54,21.82 9.75,22 10,22H14C14.25,22 14.46,21.82 14.5,21.58L14.87,18.93C15.5,18.67 16.04,18.34 16.56,17.94L19.05,18.95C19.27,19.03 19.54,18.95 19.66,18.73L21.66,15.27C21.78,15.05 21.73,14.78 21.54,14.63L19.43,12.97Z" transform="translate(3.1,3.1) scale(1.2)"/></svg>
<svg class="b" style="left:94px;top:1158px;" width="35" height="35" viewBox="0 0 35 35" preserveAspectRatio="none"><defs><linearGradient id="gg" x1="0" y1="0" x2="0" y2="1"><stop offset="0" stop-color="#c9d4d9"/><stop offset="1" stop-color="#8fa1aa"/></linearGradient></defs>
<circle cx="17.5" cy="17.5" r="17.5" fill="url(#gg)"/><path fill="#eef1f3" d="M12,15.5A3.5,3.5 0 0,1 8.5,12A3.5,3.5 0 0,1 12,8.5A3.5,3.5 0 0,1 15.5,12A3.5,3.5 0 0,1 12,15.5M19.43,12.97C19.47,12.65 19.5,12.33 19.5,12C19.5,11.67 19.47,11.34 19.43,11L21.54,9.37C21.73,9.22 21.78,8.95 21.66,8.73L19.66,5.27C19.54,5.05 19.27,4.96 19.05,5.05L16.56,6.05C16.04,5.66 15.5,5.32 14.87,5.07L14.5,2.42C14.46,2.18 14.25,2 14,2H10C9.75,2 9.54,2.18 9.5,2.42L9.13,5.07C8.5,5.32 7.96,5.66 7.44,6.05L4.95,5.05C4.73,4.96 4.46,5.05 4.34,5.27L2.34,8.73C2.21,8.95 2.27,9.22 2.46,9.37L4.57,11C4.53,11.34 4.5,11.67 4.5,12C4.5,12.33 4.53,12.65 4.57,12.97L2.46,14.63C2.27,14.78 2.21,15.05 2.34,15.27L4.34,18.73C4.46,18.95 4.73,19.03 4.95,18.95L7.44,17.94C7.96,18.34 8.5,18.68 9.13,18.93L9.5,21.58C9.54,21.82 9.75,22 10,22H14C14.25,22 14.46,21.82 14.5,21.58L14.87,18.93C15.5,18.67 16.04,18.34 16.56,17.94L19.05,18.95C19.27,19.03 19.54,18.95 19.66,18.73L21.66,15.27C21.78,15.05 21.73,14.78 21.54,14.63L19.43,12.97Z" transform="translate(3.1,3.1) scale(1.2)"/></svg>
<svg class="b" style="left:1400px;top:1102px;z-index:6;" width="30" height="30" viewBox="0 0 30 30" preserveAspectRatio="none"><path d="M14,7.35H5.65V25.45H24.15V17.2" stroke="#fff" stroke-width="3.1" fill="none" stroke-linejoin="round"/><rect x="8.7" y="15" width="2.8" height="7.8" fill="#fff"/><rect x="13.4" y="13.2" width="2.7" height="9.6" fill="#fff"/><rect x="18" y="17.2" width="2.8" height="5.6" fill="#fff"/><rect x="20.1" y="4.5" width="3.4" height="9.9" fill="#fff"/><rect x="17" y="8.2" width="10" height="2.8" fill="#fff"/></svg>
</body></html>
